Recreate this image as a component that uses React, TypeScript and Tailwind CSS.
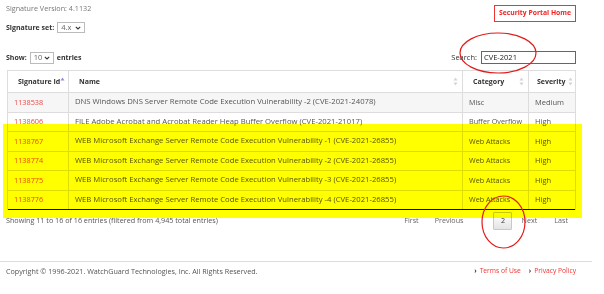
import React from "react";

const rows = [
  { id: "1138538", name: "DNS Windows DNS Server Remote Code Execution Vulnerability -2 (CVE-2021-24078)", cat: "Misc", sev: "Medium" },
  { id: "1138606", name: "FILE Adobe Acrobat and Acrobat Reader Heap Buffer Overflow (CVE-2021-21017)", cat: "Buffer Overflow", sev: "High" },
  { id: "1138767", name: "WEB Microsoft Exchange Server Remote Code Execution Vulnerability -1 (CVE-2021-26855)", cat: "Web Attacks", sev: "High" },
  { id: "1138774", name: "WEB Microsoft Exchange Server Remote Code Execution Vulnerability -2 (CVE-2021-26855)", cat: "Web Attacks", sev: "High" },
  { id: "1138775", name: "WEB Microsoft Exchange Server Remote Code Execution Vulnerability -3 (CVE-2021-26855)", cat: "Web Attacks", sev: "High" },
  { id: "1138776", name: "WEB Microsoft Exchange Server Remote Code Execution Vulnerability -4 (CVE-2021-26855)", cat: "Web Attacks", sev: "High" },
];

function SortBoth() {
  return (
    <svg width="5" height="9" viewBox="0 0 5 9" className="shrink-0">
      <path d="M2.5 0.5 L4.5 3.5 L0.5 3.5 Z" fill="#d4d4d4" />
      <path d="M2.5 8.5 L4.5 5.5 L0.5 5.5 Z" fill="#d4d4d4" />
    </svg>
  );
}

function SortAsc() {
  return (
    <svg width="5" height="9" viewBox="0 0 5 9" className="shrink-0">
      <path d="M2.5 0.5 L4.5 3.5 L0.5 3.5 Z" fill="#8f8fd8" />
    </svg>
  );
}

function Chevron() {
  return (
    <svg width="6" height="4" viewBox="0 0 6 4">
      <path d="M0.8 0.8 L3 3 L5.2 0.8" fill="none" stroke="#333" strokeWidth="1.1" />
    </svg>
  );
}

export default function App() {
  return (
    <div className="relative w-[604px] h-[294px] bg-white overflow-hidden font-['Open_Sans',sans-serif] text-[7.5px] leading-none text-[#555]">
      <div className="pl-[6px] w-[576px]">
        {/* top */}
        <div className="flex justify-between">
          <div className="flex flex-col">
            <div className="h-[18px] flex items-center text-[#777] text-[7.2px]">Signature Version: 4.1132</div>
            <div className="h-[19px] flex items-center gap-[3px]">
              <span className="font-bold text-[#333] text-[7px]">Signature set:</span>
              <div className="w-[28px] h-[11px] border border-[#bbb] flex items-center justify-between px-[3px] text-[#666]">
                <span>4.x</span>
                <Chevron />
              </div>
            </div>
          </div>
          <div className="mt-[5px] h-[17px] w-[82px] border border-[#ee3333] flex items-center justify-center font-bold text-[#ee2222] text-[6.8px]">
            Security Portal Home
          </div>
        </div>
        {/* show / search */}
        <div className="mt-[14px] h-[13px] flex items-center justify-between">
          <div className="flex items-center gap-[3px] text-[7px]">
            <span className="font-bold text-[#333]">Show:</span>
            <div className="w-[24px] h-[12px] border border-[#bbb] flex items-center justify-between px-[3px] text-[#666] text-[7.5px]">
              <span>10</span>
              <Chevron />
            </div>
            <span className="font-bold text-[#333]">entries</span>
          </div>
          <div className="flex items-center gap-[4px]">
            <span className="text-[#333]">Search:</span>
            <div className="w-[95px] h-[13px] border border-[#666] flex items-center px-[2px] text-[#222]">CVE-2021</div>
          </div>
        </div>
        {/* table */}
        <div className="mt-[6px] ml-[1px] border-l border-r border-t border-[#ddd]">
          <div className="flex h-[22px] border-b border-[#ddd] font-bold text-[#333] text-[7px] whitespace-nowrap">
            <div className="w-[61px] border-r border-[#ddd] flex items-center justify-between pl-[10px] pr-[3px]">
              <span>Signature Id</span>
              <SortAsc />
            </div>
            <div className="w-[394px] border-r border-[#ddd] flex items-center justify-between pl-[10px] pr-[4px]">
              <span>Name</span>
              <SortBoth />
            </div>
            <div className="w-[66px] border-r border-[#ddd] flex items-center justify-between pl-[10px] pr-[4px]">
              <span>Category</span>
              <SortBoth />
            </div>
            <div className="flex-1 flex items-center justify-between pl-[8px] pr-[2px]">
              <span>Severity</span>
              <SortBoth />
            </div>
          </div>
          {rows.map((r, i) => (
            <div
              key={r.id}
              className={`flex h-[19.5px] ${i === rows.length - 1 ? "border-b border-[#111]" : "border-b border-[#ddd]"} ${i === 0 ? "bg-[#f6f6f6]" : "bg-white"}`}
            >
              <div className="w-[61px] border-r border-[#ddd] flex items-center pl-[6px] text-[#f04848] text-[7.3px]">{r.id}</div>
              <div className="w-[394px] border-r border-[#ddd] flex items-center pl-[6px] whitespace-nowrap text-[7.7px]">{r.name}</div>
              <div className="w-[66px] border-r border-[#ddd] flex items-center pl-[6px] whitespace-nowrap text-[7.2px]">{r.cat}</div>
              <div className="flex-1 flex items-center pl-[6px]">{r.sev}</div>
            </div>
          ))}
        </div>
        {/* info / pagination */}
        <div className="mt-[2px] h-[18px] flex items-center justify-between">
          <span className="text-[7.2px]">Showing 11 to 16 of 16 entries (filtered from 4,945 total entries)</span>
          <div className="flex items-center text-[#666] pr-[8px] text-[7.2px]">
            <span>First</span>
            <span className="ml-[16px]">Previous</span>
            <span className="ml-[30px] w-[19px] h-[18px] border border-[#c8c8c8] rounded-[1px] bg-gradient-to-b from-white to-[#e4e4e4] flex items-center justify-center text-[#333]">2</span>
            <span className="ml-[9px]">Next</span>
            <span className="ml-[17px]">Last</span>
          </div>
        </div>
      </div>
      {/* footer */}
      <div className="mt-[31px] w-[592px] border-t border-[#ddd] h-[20px] flex items-center justify-between pl-[6px] pr-[16px]">
        <span className="text-[#555] text-[7.2px]">Copyright © 1996-2021. WatchGuard Technologies, Inc. All Rights Reserved.</span>
        <div className="flex items-center gap-[8px] text-[6.7px]">
          <span className="flex items-center gap-[3px]"><span className="text-[#333] font-bold">›</span><span className="text-[#ee3333]">Terms of Use</span></span>
          <span className="flex items-center gap-[3px]"><span className="text-[#333] font-bold">›</span><span className="text-[#ee3333]">Privacy Policy</span></span>
        </div>
      </div>
      {/* annotations */}
      <div className="absolute left-[3px] top-[124px] w-[579px] h-[94px] bg-[#ffff00] mix-blend-multiply pointer-events-none" />
      <svg className="absolute left-0 top-0 pointer-events-none" width="604" height="294">
        <ellipse cx="498" cy="53" rx="38" ry="20" fill="none" stroke="#e31b1b" strokeWidth="1.2" />
        <ellipse cx="503.5" cy="222" rx="21.5" ry="26" fill="none" stroke="#e31b1b" strokeWidth="1.2" />
      </svg>
    </div>
  );
}
